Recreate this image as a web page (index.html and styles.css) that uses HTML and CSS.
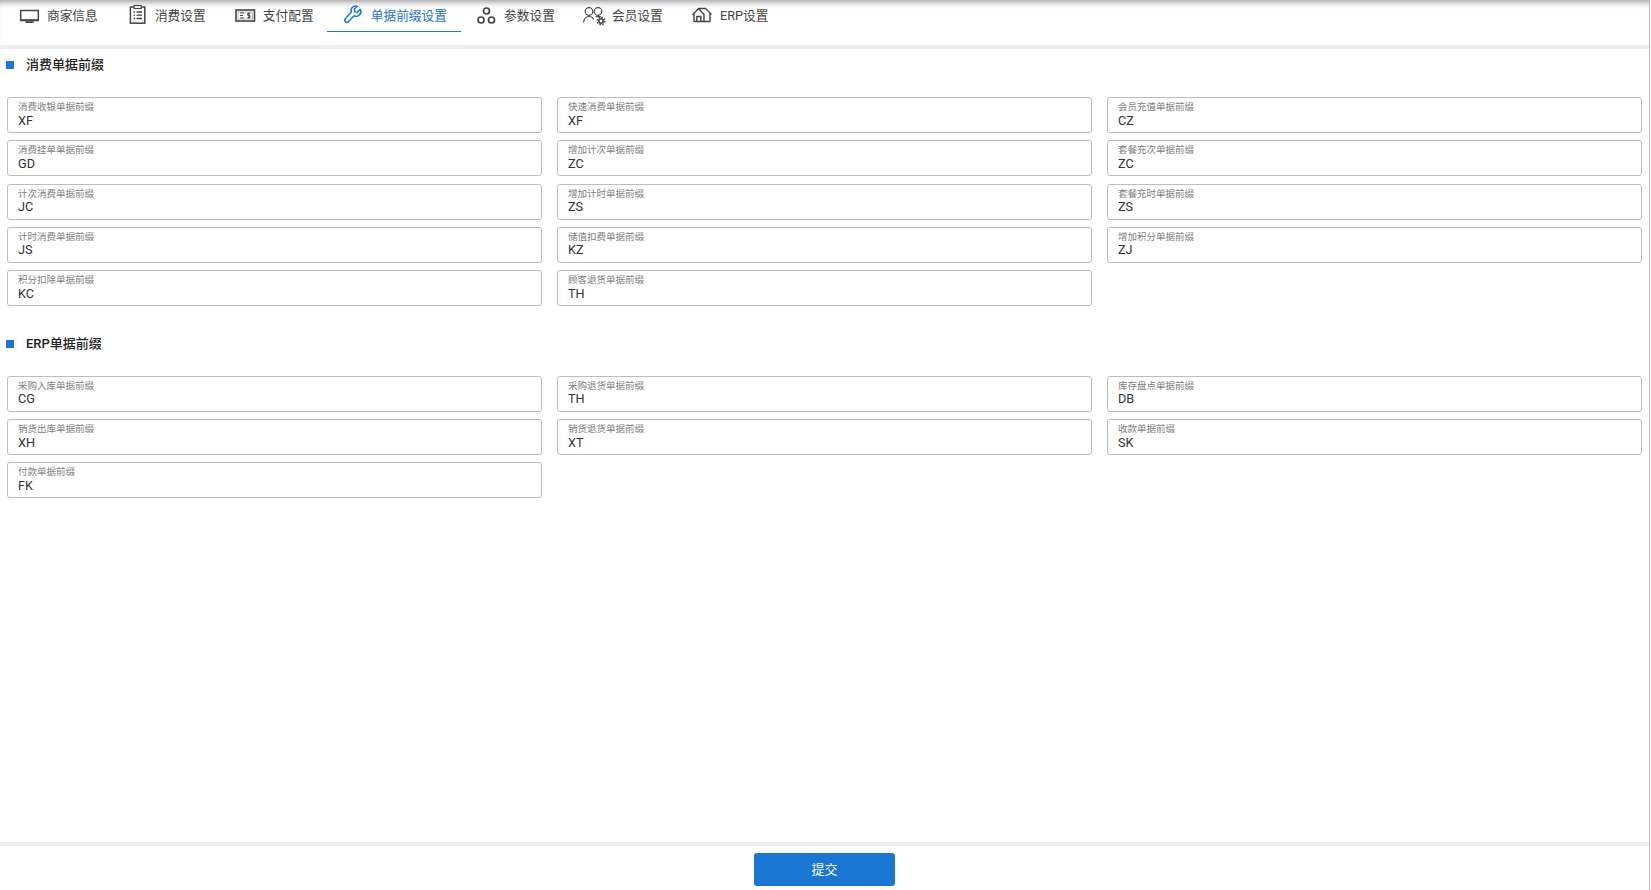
FILE: index.html
```html
<!DOCTYPE html>
<html lang="en">
<head>
  <meta charset="UTF-8" />
  <title>单据前缀设置</title>
  <link rel="stylesheet" href="styles.css">
</head>
<body>
  <div class="page">
    <nav class="tabs">
      <a class="tab">
        <svg class="tab-icon" viewBox="0 0 24 24"><rect x="2.700" y="7.500" width="17.600" height="10" fill="none" stroke="currentColor" stroke-width="1.500"/><path d="M3 17.200h17M7.500 19.200h8" stroke="currentColor" stroke-width="1.800" fill="none"/></svg>
        <span>商家信息</span>
      </a>
      <a class="tab">
        <svg class="tab-icon" viewBox="0 0 24 24"><rect x="4.400" y="4" width="14.400" height="16.200" fill="none" stroke="currentColor" stroke-width="1.500"/><rect x="8" y="2.500" width="7.200" height="3" fill="#fff" stroke="currentColor" stroke-width="1.200"/><path d="M7.500 9h1.500M10.500 9h5.500M7.500 12.200h1.500M10.500 12.200h5.500M7.500 15.500h1.500M10.500 15.500h5.500" stroke="currentColor" stroke-width="1.300" fill="none"/></svg>
        <span>消费设置</span>
      </a>
      <a class="tab">
        <svg class="tab-icon" viewBox="0 0 24 24"><rect x="3" y="7" width="18.500" height="11" fill="none" stroke="currentColor" stroke-width="1.600"/><rect x="5" y="9" width="14.500" height="7" fill="none" stroke="#aaa" stroke-width="0.800"/><path d="M7 10h4M7 12.500h3M7 15h4" stroke="currentColor" stroke-width="1.200" fill="none"/><path d="M17.400 10.300h-2.600v2.200h2.200v2.200h-2.600M15.900 9.400v6.200" stroke="currentColor" stroke-width="1" fill="none"/></svg>
        <span>支付配置</span>
      </a>
      <a class="tab active">
        <svg class="tab-icon" viewBox="0 0 24 24"><path transform="translate(1.200 0.800) scale(0.880)" d="M20.500 6.200l-3.400 3.400-2.700-.7-.7-2.700 3.400-3.400a5.300 5.300 0 0 0-6.800 6.600L3.600 16.900a2.400 2.400 0 0 0 3.400 3.400l6.500-6.700a5.300 5.300 0 0 0 7-7.400z" fill="none" stroke="currentColor" stroke-width="1.700" stroke-linejoin="round"/></svg>
        <span>单据前缀设置</span>
      </a>
      <a class="tab">
        <svg class="tab-icon" viewBox="0 0 24 24"><g fill="none" stroke="currentColor" stroke-width="1.700"><circle cx="11.500" cy="8" r="3"/><circle cx="6" cy="17" r="3"/><circle cx="16.500" cy="17" r="3"/></g></svg>
        <span>参数设置</span>
      </a>
      <a class="tab">
        <svg class="tab-icon" viewBox="0 0 24 24"><g fill="none" stroke="currentColor" stroke-width="1.200"><circle cx="6" cy="8.500" r="3.800"/><path d="M0.600 19.500c.4-3.600 2.400-6 5.400-6 2.200 0 3.700 1 4.600 2.800"/><circle cx="15" cy="8.500" r="3.800"/><path d="M12.500 13.700c1.800-.6 3.800-.5 5.500.3"/></g><circle cx="18" cy="18" r="2.200" fill="none" stroke="currentColor" stroke-width="1.600"/><circle cx="18" cy="18" r="3.800" fill="none" stroke="currentColor" stroke-width="1.400" stroke-dasharray="1.500 1.480"/></svg>
        <span>会员设置</span>
      </a>
      <a class="tab">
        <svg class="tab-icon" viewBox="0 0 24 24"><path d="M1.500 12L7.500 5.500H14.500L20.500 11.500M3 10.500V18.500H19V10.500M7.500 5.500L13 11.500V18.500M5.800 18.500V13.500H9.800V18.500" fill="none" stroke="currentColor" stroke-width="1.400" stroke-linejoin="round"/></svg>
        <span>ERP设置</span>
      </a>
    </nav>

    <main class="content">
      <section class="section">
        <h2 class="section-title">消费单据前缀</h2>
        <div class="fields">
          <div class="field"><label>消费收银单据前缀</label><span>XF</span></div>
          <div class="field"><label>快速消费单据前缀</label><span>XF</span></div>
          <div class="field"><label>会员充值单据前缀</label><span>CZ</span></div>
          <div class="field"><label>消费挂单单据前缀</label><span>GD</span></div>
          <div class="field"><label>增加计次单据前缀</label><span>ZC</span></div>
          <div class="field"><label>套餐充次单据前缀</label><span>ZC</span></div>
          <div class="field"><label>计次消费单据前缀</label><span>JC</span></div>
          <div class="field"><label>增加计时单据前缀</label><span>ZS</span></div>
          <div class="field"><label>套餐充时单据前缀</label><span>ZS</span></div>
          <div class="field"><label>计时消费单据前缀</label><span>JS</span></div>
          <div class="field"><label>储值扣费单据前缀</label><span>KZ</span></div>
          <div class="field"><label>增加积分单据前缀</label><span>ZJ</span></div>
          <div class="field"><label>积分扣除单据前缀</label><span>KC</span></div>
          <div class="field"><label>顾客退货单据前缀</label><span>TH</span></div>
        </div>
      </section>

      <section class="section">
        <h2 class="section-title">ERP单据前缀</h2>
        <div class="fields">
          <div class="field"><label>采购入库单据前缀</label><span>CG</span></div>
          <div class="field"><label>采购退货单据前缀</label><span>TH</span></div>
          <div class="field"><label>库存盘点单据前缀</label><span>DB</span></div>
          <div class="field"><label>销货出库单据前缀</label><span>XH</span></div>
          <div class="field"><label>销货退货单据前缀</label><span>XT</span></div>
          <div class="field"><label>收款单据前缀</label><span>SK</span></div>
          <div class="field"><label>付款单据前缀</label><span>FK</span></div>
        </div>
      </section>
    </main>

    <footer class="footer">
      <button class="submit">提交</button>
    </footer>
  </div>
</body>
</html>
```

FILE: styles.css
```css
html, body {
  margin: 0;
  height: 100%;
  overflow: hidden;
}

body {
  font-family: Roboto, "Noto Sans CJK SC", sans-serif;
  background: #fff;
  color: #333;
}

.page {
  height: 890px;
  width: 1650px;
  box-sizing: border-box;
  display: flex;
  flex-direction: column;
  border-right: 1px solid #bdbdbd;
}

/* top tabs */
.tabs {
  height: 45px;
  box-sizing: border-box;
  padding-left: 3.6px;
  display: flex;
  align-items: flex-start;
  box-shadow: inset 0 7px 6px -5px #999;
}

.tab {
  height: 32px;
  box-sizing: border-box;
  padding: 0 13.8px 3px 13.4px;
  display: flex;
  align-items: center;
  gap: 6px;
  font-size: 12.7px;
  color: #444;
}

.tab.active {
  color: #1976d2;
  border-bottom: 1px solid #1976d2;
  padding-bottom: 2px;
}

.tab-icon {
  width: 24px;
  height: 24px;
  flex: none;
  margin: 0 -0.6px 0 0.6px;
}

/* form */
.content {
  flex: 1;
  border-top: 4px solid #eceff1;
  padding: 6px 8px 0 7px;
}

.section + .section {
  margin-top: 27.5px;
}

.section-title {
  display: flex;
  align-items: flex-start;
  height: 20px;
  margin: 0 0 22px -1px;
  font-size: 13px;
  line-height: 19px;
  font-weight: 500;
  color: #222;
}

.section-title::before {
  content: "";
  width: 8px;
  height: 8px;
  margin: 6px 12px 0 0;
  background: #1976d2;
}

.fields {
  display: grid;
  grid-template-columns: repeat(3, 535px);
  column-gap: 15px;
  row-gap: 7.33px;
}

.field {
  height: 36px;
  box-sizing: border-box;
  padding: 3px 10px 0;
  border: 1px solid #bdbdbd;
  border-radius: 3px;
  display: flex;
  flex-direction: column;
}

.field label {
  font-size: 9.5px;
  line-height: 12px;
  color: #808080;
}

.field span {
  font-size: 12.7px;
  line-height: 14px;
  margin-top: 0.5px;
  color: #333;
}

/* bottom bar */
.footer {
  height: 48px;
  box-sizing: border-box;
  border-top: 4px solid #eceff1;
  display: flex;
  justify-content: center;
  padding-top: 7px;
}

.submit {
  width: 141px;
  height: 33px;
  padding: 0 0 3px;
  border: none;
  border-radius: 3px;
  background: #1976d2;
  color: #fff;
  font-family: inherit;
  font-size: 13px;
}
```
